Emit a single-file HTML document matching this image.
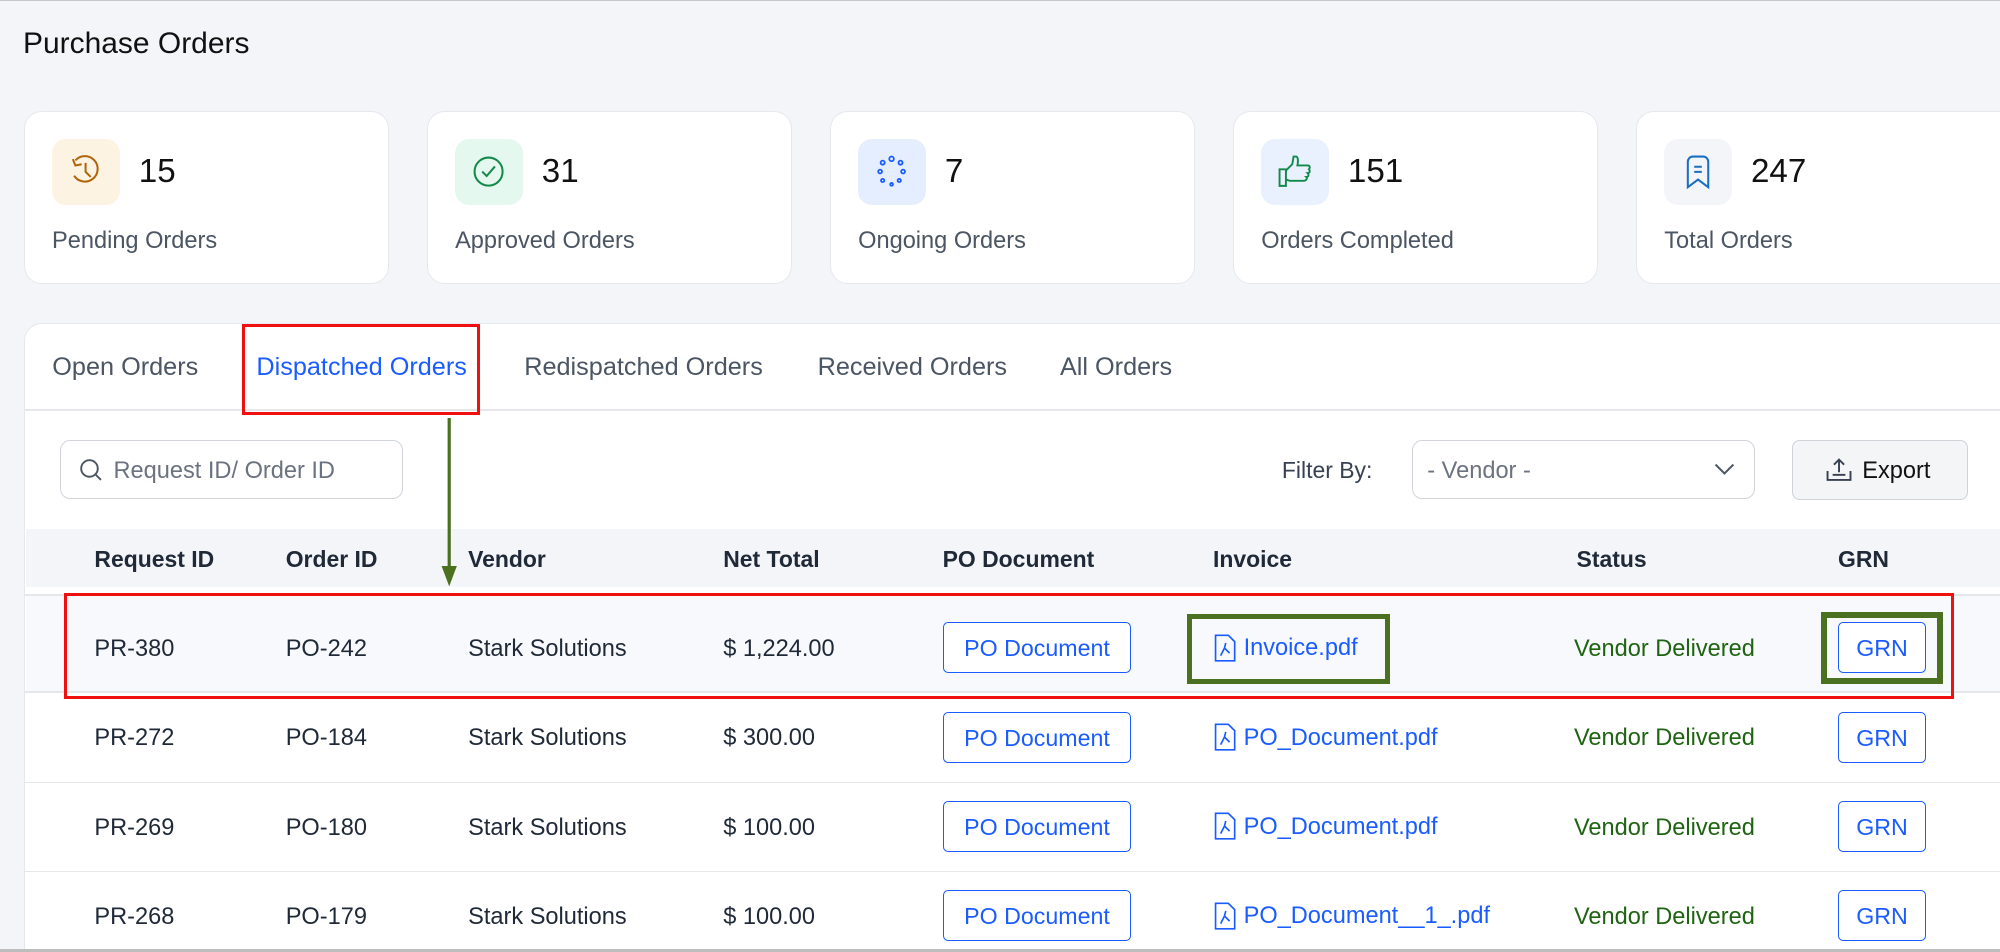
<!DOCTYPE html>
<html><head><style>
html,body{margin:0;padding:0;width:2000px;height:952px;overflow:hidden;background:#f4f5f9}
#w{zoom:1.27551;width:1568px;height:746px;position:relative;font-family:"Liberation Sans",sans-serif;color:#111827}
.a{position:absolute}
.card{position:absolute;top:87px;width:286px;height:136px;background:#fff;border:1px solid #e6e8ee;border-radius:14px;box-sizing:border-box}
.ib{position:absolute;left:21px;top:21px;width:53px;height:52px;border-radius:11px;display:flex;align-items:center;justify-content:center}
.num{position:absolute;left:89px;top:32px;font-size:26px;color:#111}
.lab{position:absolute;left:21px;top:90px;font-size:18.5px;color:#4b5563}
.tab{position:absolute;top:277px;font-size:19.8px;color:#4b5563}
.th{position:absolute;top:428px;font-size:18px;font-weight:bold;color:#1f2937}
.td{position:absolute;font-size:18.5px;color:#1f2937}
.pob{position:absolute;left:739px;width:148px;height:40px;border:1px solid #1a5cff;border-radius:4px;box-sizing:border-box;color:#1a5cff;font-size:18.2px;text-align:center;line-height:40px;background:#fff}
.grn{position:absolute;left:1441px;width:69px;height:40px;border:1px solid #1a5cff;border-radius:4px;box-sizing:border-box;color:#1a5cff;font-size:18.2px;text-align:center;line-height:40px;background:#fff}
.st{position:absolute;left:1234px;font-size:18.5px;color:#1f6412}
.pdf{position:absolute;left:951px;font-size:18.5px;color:#1a5cff;display:flex;align-items:center;gap:6px}
.line{position:absolute;left:19px;width:1549px;height:1px;background:#e5e7eb}
</style></head><body><div id="w">
<div class="a" style="left:0;top:0;width:1568px;height:1px;background:#c8c8c8"></div>
<div class="a" style="left:18px;top:21px;font-size:23.5px;color:#111">Purchase Orders</div>

<div class="card" style="left:19px"><div class="ib" style="background:#fdf3e3"><svg width="26" height="28" viewBox="0 0 26 28" fill="none" stroke="#b0650b" stroke-width="1.6"><path d="M5 5a10 10 0 1 1-1 12"/><path d="M3 4l2 5 5-1"/><path d="M13 7v7l4 4"/></svg></div><div class="num">15</div><div class="lab">Pending Orders</div></div>
<div class="card" style="left:335px"><div class="ib" style="background:#e5f8ef"><svg width="26" height="26" viewBox="0 0 26 26" fill="none" stroke="#138a4a" stroke-width="1.6"><circle cx="13" cy="13" r="11"/><path d="M8 13l3.5 3.5L18 9"/></svg></div><div class="num">31</div><div class="lab">Approved Orders</div></div>
<div class="card" style="left:651px"><div class="ib" style="background:#e5eefe"><svg width="26" height="26" viewBox="0 0 26 26" fill="none" stroke="#1a5cff" stroke-width="1.4"><circle cx="13" cy="3" r="1.8"/><circle cx="20" cy="6" r="1.6"/><circle cx="22" cy="13" r="1.5"/><circle cx="19" cy="20" r="1.3"/><circle cx="13" cy="23" r="1.1"/><circle cx="6" cy="20" r="1.3"/><circle cx="4" cy="13" r="1.5"/><circle cx="6" cy="6" r="1.6"/></svg></div><div class="num">7</div><div class="lab">Ongoing Orders</div></div>
<div class="card" style="left:967px"><div class="ib" style="background:#e8f1fd"><svg width="28" height="28" viewBox="0 0 28 28" fill="none" stroke="#138a4a" stroke-width="1.5"><path d="M2 12h5v13H2z"/><path d="M7 13l5-5 1-6h2c1 0 2 2 1 7h8c2 0 2 2 1 3 1 1 1 3-1 3 1 1 1 3-1 3 1 1 0 3-2 3H10l-3-1"/></svg></div><div class="num">151</div><div class="lab">Orders Completed</div></div>
<div class="card" style="left:1283px;width:300px"><div class="ib" style="background:#f3f5f9"><svg width="22" height="28" viewBox="0 0 22 28" fill="none" stroke="#1a6fc4" stroke-width="1.6"><path d="M3 26V6a4 4 0 0 1 4-4h8a4 4 0 0 1 4 4v20l-8-6z"/><path d="M8 10h6M8 14h6"/></svg></div><div class="num">247</div><div class="lab">Total Orders</div></div>

<div class="a" style="left:19px;top:253px;width:1560px;height:500px;background:#fff;border:1px solid #e6e8ee;border-radius:14px 0 0 0"></div>
<div class="tab" style="left:41px">Open Orders</div>
<div class="tab" style="left:201px;color:#1a5cff">Dispatched Orders</div>
<div class="tab" style="left:411px">Redispatched Orders</div>
<div class="tab" style="left:641px">Received Orders</div>
<div class="tab" style="left:831px">All Orders</div>
<div class="line" style="top:321px"></div>
<div class="a" style="left:190px;top:254px;width:186px;height:71px;border:3px solid #f01010;box-sizing:border-box"></div>

<div class="a" style="left:47px;top:345px;width:269px;height:46px;border:1px solid #d1d5db;border-radius:8px;box-sizing:border-box"></div>
<svg class="a" style="left:61px;top:358px" width="20" height="20" viewBox="0 0 20 20" fill="none" stroke="#4b5563" stroke-width="1.5"><circle cx="9" cy="9" r="6.5"/><path d="M14 14l4 4"/></svg>
<div class="a" style="left:89px;top:358px;font-size:18.5px;color:#6b7280">Request ID/ Order ID</div>
<div class="a" style="left:1005px;top:358px;font-size:18px;color:#374151">Filter By:</div>
<div class="a" style="left:1107px;top:345px;width:269px;height:46px;border:1px solid #d1d5db;border-radius:8px;box-sizing:border-box"></div>
<div class="a" style="left:1119px;top:358px;font-size:18.5px;color:#6b7280">- Vendor -</div>
<svg class="a" style="left:1343px;top:362px" width="18" height="12" viewBox="0 0 18 12" fill="none" stroke="#4b5563" stroke-width="1.6"><path d="M2 2l7 7 7-7"/></svg>
<div class="a" style="left:1405px;top:345px;width:138px;height:47px;border:1px solid #cfd3da;border-radius:6px;box-sizing:border-box;background:#f4f5f7"></div>
<svg class="a" style="left:1431px;top:358px" width="22" height="20" viewBox="0 0 22 20" fill="none" stroke="#374151" stroke-width="1.5"><path d="M2 11v7h18v-7"/><path d="M6 14h10"/><path d="M11 12V2M7 6l4-4 4 4"/></svg>
<div class="a" style="left:1460px;top:358px;font-size:18.5px;color:#111">Export</div>

<div class="a" style="left:20px;top:415px;width:1548px;height:45px;background:#f4f5f9"></div>
<div class="th" style="left:74px">Request ID</div><div class="th" style="left:224px">Order ID</div><div class="th" style="left:367px">Vendor</div><div class="th" style="left:567px">Net Total</div><div class="th" style="left:739px">PO Document</div><div class="th" style="left:951px">Invoice</div><div class="th" style="left:1236px">Status</div><div class="th" style="left:1441px">GRN</div>

<div class="a" style="left:20px;top:466px;width:1548px;height:76px;background:#f8f9fc"></div>
<div class="line" style="top:466px"></div><div class="line" style="top:542px"></div><div class="line" style="top:613px"></div><div class="line" style="top:683px"></div>

<div class="td" style="left:74px;top:498px">PR-380</div><div class="td" style="left:224px;top:498px">PO-242</div><div class="td" style="left:367px;top:498px">Stark Solutions</div><div class="td" style="left:567px;top:498px">$ 1,224.00</div>
<div class="pob" style="top:488px">PO Document</div>
<div class="a" style="left:931px;top:481px;width:159px;height:55px;border:4px solid #4a7020;box-sizing:border-box"></div>
<div class="pdf" style="top:497px"><svg width="18" height="22" viewBox="0 0 18 22" fill="none" stroke="#1a5cff" stroke-width="1.3"><path d="M2 1h10l5 5v15H2z"/><path d="M6 17l3-6 1-4m-1 4 4 4"/></svg>Invoice.pdf</div>
<div class="st" style="top:498px">Vendor Delivered</div>
<div class="a" style="left:1428px;top:480px;width:95px;height:56px;border:5px solid #4a7020;box-sizing:border-box"></div>
<div class="grn" style="top:488px">GRN</div>

<div class="td" style="left:74px;top:568px">PR-272</div><div class="td" style="left:224px;top:568px">PO-184</div><div class="td" style="left:367px;top:568px">Stark Solutions</div><div class="td" style="left:567px;top:568px">$ 300.00</div>
<div class="pob" style="top:558px">PO Document</div>
<div class="pdf" style="top:567px"><svg width="18" height="22" viewBox="0 0 18 22" fill="none" stroke="#1a5cff" stroke-width="1.3"><path d="M2 1h10l5 5v15H2z"/><path d="M6 17l3-6 1-4m-1 4 4 4"/></svg>PO_Document.pdf</div>
<div class="st" style="top:568px">Vendor Delivered</div><div class="grn" style="top:558px">GRN</div>

<div class="td" style="left:74px;top:638px">PR-269</div><div class="td" style="left:224px;top:638px">PO-180</div><div class="td" style="left:367px;top:638px">Stark Solutions</div><div class="td" style="left:567px;top:638px">$ 100.00</div>
<div class="pob" style="top:628px">PO Document</div>
<div class="pdf" style="top:637px"><svg width="18" height="22" viewBox="0 0 18 22" fill="none" stroke="#1a5cff" stroke-width="1.3"><path d="M2 1h10l5 5v15H2z"/><path d="M6 17l3-6 1-4m-1 4 4 4"/></svg>PO_Document.pdf</div>
<div class="st" style="top:638px">Vendor Delivered</div><div class="grn" style="top:628px">GRN</div>

<div class="td" style="left:74px;top:708px">PR-268</div><div class="td" style="left:224px;top:708px">PO-179</div><div class="td" style="left:367px;top:708px">Stark Solutions</div><div class="td" style="left:567px;top:708px">$ 100.00</div>
<div class="pob" style="top:698px">PO Document</div>
<div class="pdf" style="top:707px"><svg width="18" height="22" viewBox="0 0 18 22" fill="none" stroke="#1a5cff" stroke-width="1.3"><path d="M2 1h10l5 5v15H2z"/><path d="M6 17l3-6 1-4m-1 4 4 4"/></svg>PO_Document__1_.pdf</div>
<div class="st" style="top:708px">Vendor Delivered</div><div class="grn" style="top:698px">GRN</div>

<div class="a" style="left:50px;top:465px;width:1482px;height:83px;border:3px solid #f01010;box-sizing:border-box"></div>
<svg class="a" style="left:344px;top:328px" width="16" height="134" viewBox="0 0 16 134"><path d="M8 0v120" stroke="#4a7020" stroke-width="2.5"/><path d="M2 116l6 16 6-16z" fill="#4a7020"/></svg>
<div class="a" style="left:0;top:744px;width:1568px;height:2px;background:#bdbdbd"></div>
</div></body></html>
